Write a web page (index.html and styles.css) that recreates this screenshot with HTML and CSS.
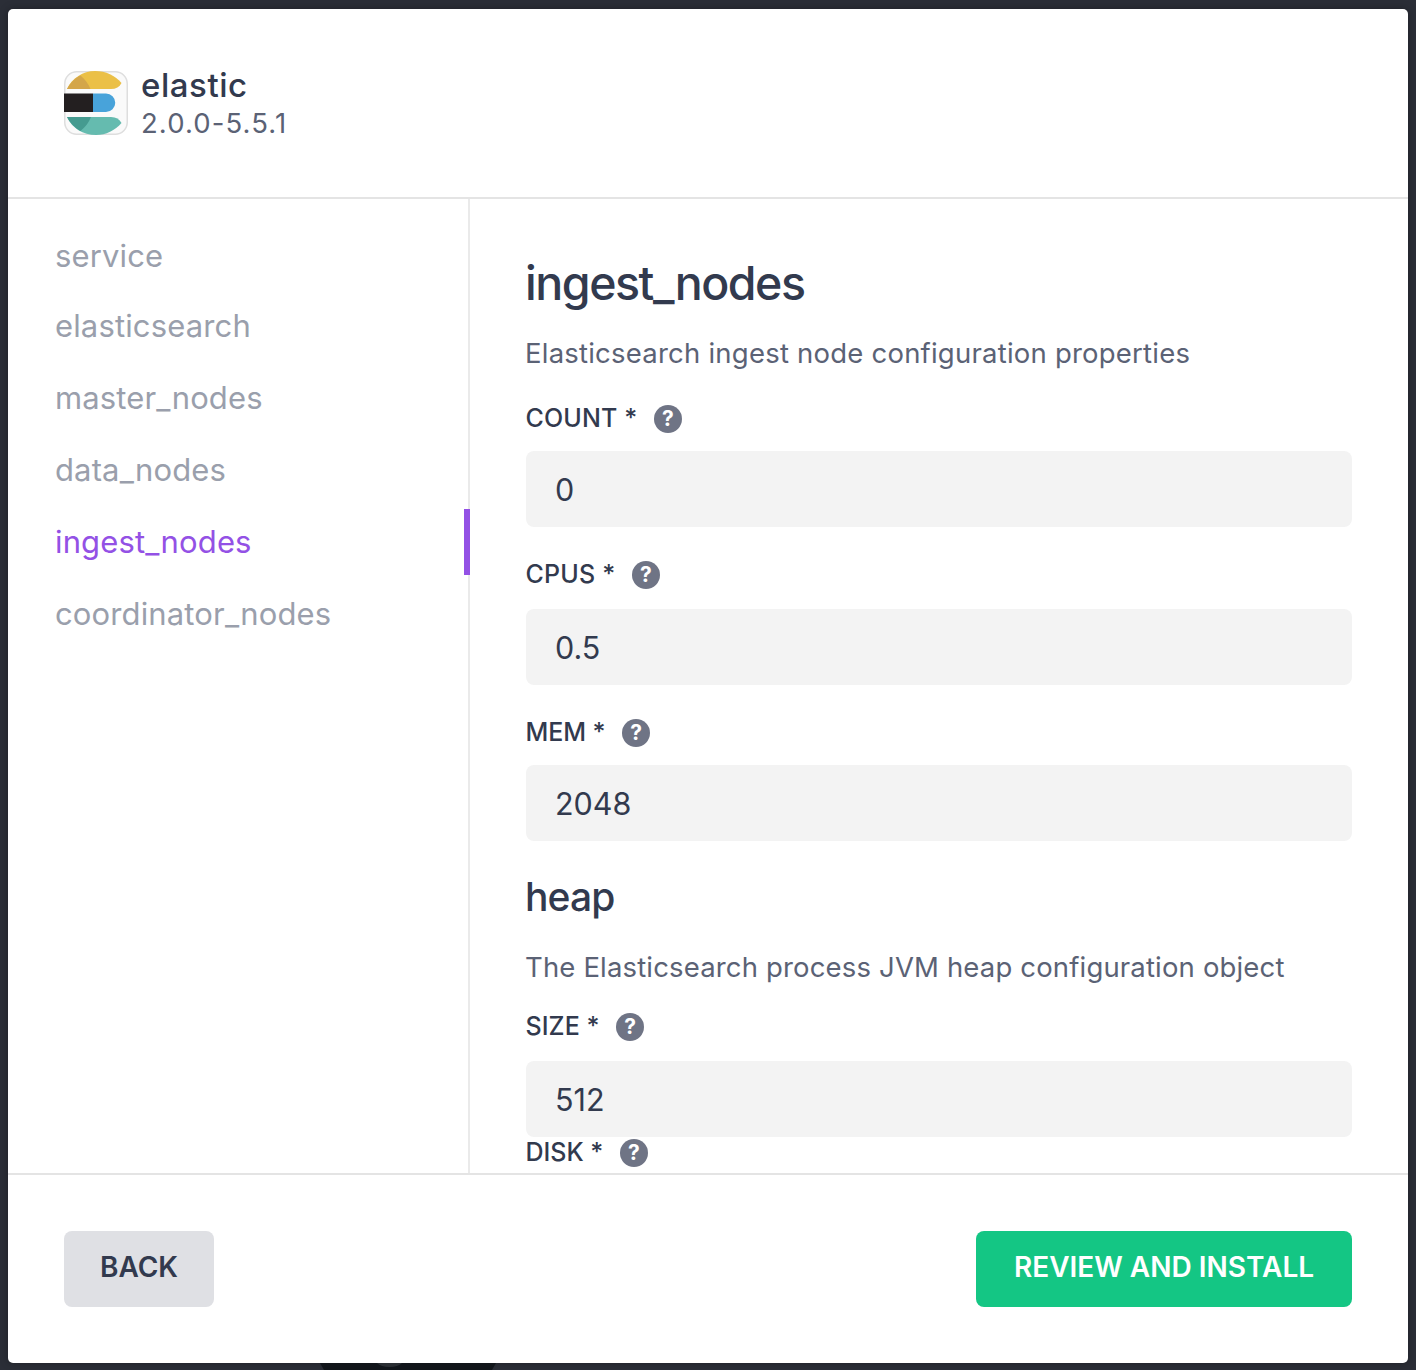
FILE: index.html
```html
<!DOCTYPE html>
<html lang="en">
<head>
<meta charset="utf-8">
<title>elastic</title>
<link rel="stylesheet" href="styles.css">
</head>
<body>
<svg class="backdrop" viewBox="0 0 176 7">
  <path d="M0 0H176L172 7H4z" fill="#11151a"/>
  <path d="M57 0H82Q78 4 69.500 4 61 4 57 0z" fill="#2a2e33"/>
</svg>
<div class="modal">
  <header class="header">
    <svg class="logo" viewBox="0 0 64 64">
      <rect x="0.75" y="0.75" width="62.5" height="62.5" rx="12" fill="#fafafa" stroke="#dedede" stroke-width="1.5"/>
      <path d="M3 18C8 7 19 0 31 0c11 0 20 4.500 26.500 12C55.500 16 52 18 47 18z" fill="#ebc047"/>
      <path d="M3 18C6 12 11 7 16.500 4.500 21 8 24.500 13 26.500 18z" fill="#d4a64a"/>
      <path d="M0 22.500H29V41H0z" fill="#231f20"/>
      <path d="M29 22.500H42a9.250 9.250 0 0 1 0 18.500H29z" fill="#48a3da"/>
      <path d="M3 46H47c5 0 8.500 2 10.500 6C51 59.500 42 64 32 64 19 64 8 57 3 46z" fill="#65bbaf"/>
      <path d="M3 46H27C25 51 21.500 56 16.500 60 11 57 6 52 3 46z" fill="#459b90"/>
    </svg>
    <div class="package">
      <div class="name">elastic</div>
      <div class="version">2.0.0-5.5.1</div>
    </div>
  </header>
  <div class="body">
    <nav class="tabs">
      <a class="tab tab-first">service</a>
      <a class="tab">elasticsearch</a>
      <a class="tab">master_nodes</a>
      <a class="tab">data_nodes</a>
      <a class="tab active">ingest_nodes</a>
      <a class="tab">coordinator_nodes</a>
    </nav>
    <main class="form">
      <h1 class="title">ingest_nodes</h1>
      <p class="description">Elasticsearch ingest node configuration properties</p>
      <label class="label label-count"><span>COUNT *</span><i class="help">?</i></label>
      <input class="field" value="0">
      <label class="label label-cpus"><span>CPUS *</span><i class="help">?</i></label>
      <input class="field" value="0.5">
      <label class="label label-mem"><span>MEM *</span><i class="help">?</i></label>
      <input class="field" value="2048">
      <h2 class="subtitle">heap</h2>
      <p class="description description-heap">The Elasticsearch process JVM heap configuration object</p>
      <label class="label label-size"><span>SIZE *</span><i class="help">?</i></label>
      <input class="field" value="512">
      <label class="label label-disk"><span>DISK *</span><i class="help">?</i></label>
    </main>
  </div>
  <footer class="footer">
    <button class="button">BACK</button>
    <button class="button primary">REVIEW AND INSTALL</button>
  </footer>
</div>
</body>
</html>
```
FILE: styles.css
```css
* { box-sizing: border-box; }

body {
  margin: 0;
  height: 1370px;
  padding: 9px 8px 7px;
  overflow: hidden;
  background: #2b2e37;
  color: #323a4e;
  font-family: Inter, "Liberation Sans", sans-serif;
}

.backdrop {
  position: absolute;
  left: 320px;
  top: 1363px;
  width: 176px;
  height: 7px;
}

.modal {
  height: 1354px;
  display: flex;
  flex-direction: column;
  overflow: hidden;
  background: #fff;
  border-radius: 5px;
  box-shadow: 0 0 8px rgba(0, 0, 0, .3);
}

/* Header */
.header {
  height: 190px;
  flex: none;
  display: flex;
  gap: 13px;
  padding: 62px 56px 0;
  border-bottom: 2px solid #e4e4e4;
}
.logo { width: 64px; height: 64px; }
.package { margin-top: -6px; }
.name {
  font-size: 33px;
  line-height: 40px;
  font-weight: 500;
  letter-spacing: .55px;
}
.version {
  font-size: 27.5px;
  line-height: 36px;
  letter-spacing: 1.1px;
  color: #5b6275;
}

/* Section tabs */
.body { flex: 1; min-height: 0; display: flex; }
.tabs {
  width: 462px;
  flex: none;
  display: flex;
  flex-direction: column;
  gap: 6px;
  padding-top: 24px;
  border-right: 2px solid #eaeaea;
}
.tab {
  height: 66px;
  flex: none;
  margin-right: -2px;
  padding-left: 47px;
  border-right: 6px solid transparent;
  color: #9a9fac;
  font-size: 31px;
  line-height: 66px;
  letter-spacing: .14px;
}
.tab-first { height: 64px; }
.active { color: #9351e5; border-color: #9351e5; }

/* Form */
.form { flex: 1; padding: 50px 56px 0; overflow: hidden; }
.title {
  margin: 0 0 16px -1px;
  font-size: 46.5px;
  line-height: 68px;
  font-weight: 500;
  letter-spacing: -1.45px;
}
.description {
  margin: 0 0 0 -1px;
  font-size: 27.5px;
  line-height: 40px;
  letter-spacing: .22px;
  color: #5b6275;
}
.description-heap { letter-spacing: .16px; }
.label {
  display: flex;
  align-items: center;
  gap: 16px;
  height: 28px;
  font-size: 25px;
  font-weight: 500;
}
.label span { margin-left: -.5px; margin-right: .5px; padding-bottom: 2px; }
.label-count { margin: 32px 0 18px; letter-spacing: .15px; }
.label-cpus { margin: 34px 0 20px; letter-spacing: .2px; }
.label-mem { margin: 34px 0 18px; letter-spacing: -.07px; }
.label-size { margin: 26px 0 20px; letter-spacing: .05px; }
.label-disk { margin: 2px 0 0; }
.help {
  width: 28px;
  height: 28px;
  border-radius: 50%;
  background: #6f7485;
  color: #fff;
  font-size: 21px;
  line-height: 28px;
  font-style: normal;
  font-weight: 700;
  letter-spacing: 0;
  text-align: center;
}
.field {
  display: block;
  width: 826px;
  height: 76px;
  padding: 0 29px;
  border: 0;
  border-radius: 8px;
  background: #f3f3f3;
  color: #323a4e;
  font: 400 30.5px Inter, "Liberation Sans", sans-serif;
  letter-spacing: 0;
}
.subtitle {
  margin: 32px 0 27px -1px;
  font-size: 39px;
  line-height: 47px;
  font-weight: 500;
  letter-spacing: -.85px;
}

/* Footer */
.footer {
  height: 190px;
  flex: none;
  display: flex;
  justify-content: space-between;
  padding: 56px;
  border-top: 2px solid #e4e4e4;
}
.button {
  width: 150px;
  height: 76px;
  padding: 0 0 4px;
  border: 0;
  border-radius: 8px;
  background: #dfe0e4;
  color: #323a4e;
  font: 600 28px Inter, "Liberation Sans", sans-serif;
  letter-spacing: 0;
}
.primary { width: 376px; background: #14c684; color: #fff; }
```
